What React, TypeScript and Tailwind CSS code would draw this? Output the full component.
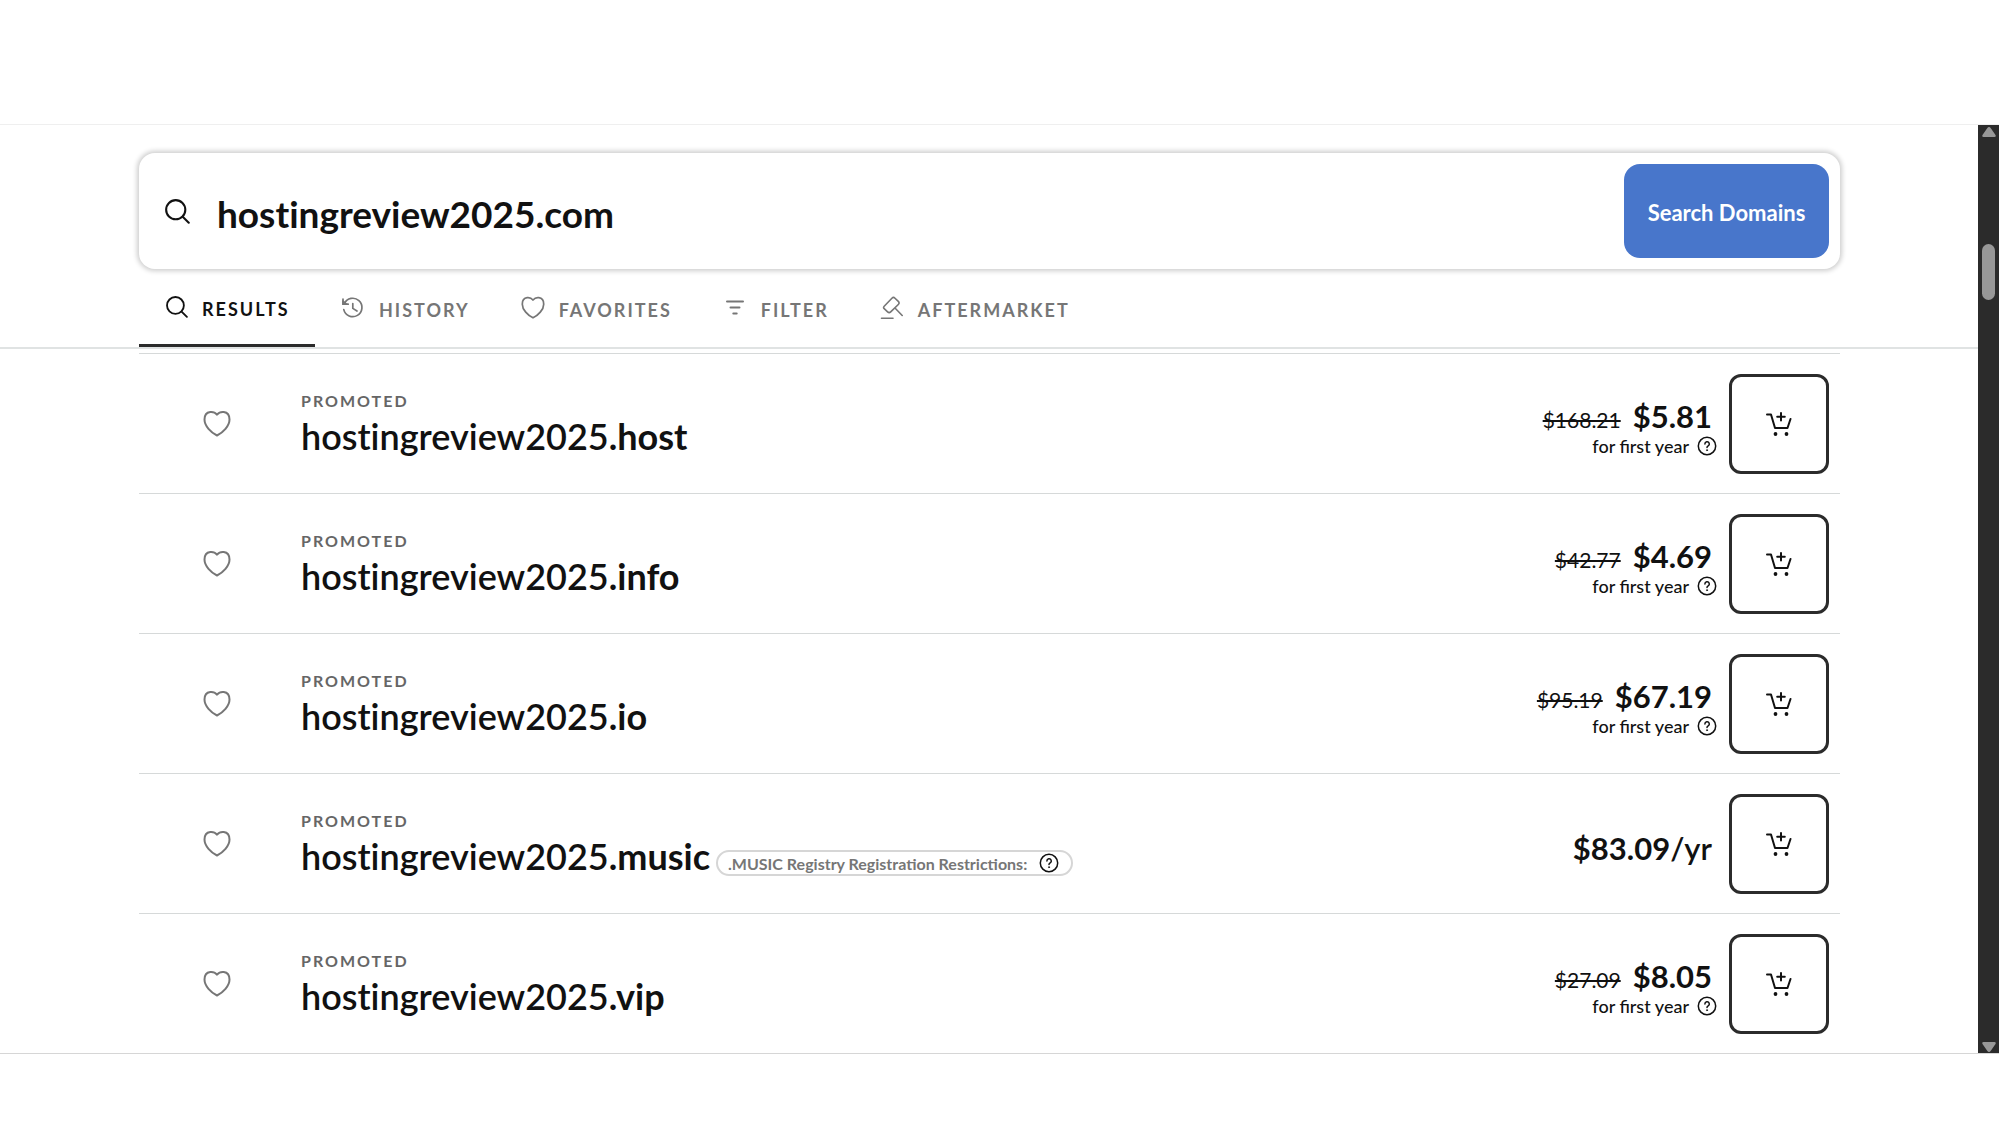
import type { ReactNode } from "react";

type Domain = {
  tld: string;
  price: string;
  oldPrice?: string;
  suffix?: string;
  restriction?: string;
};

const domains: Domain[] = [
  { tld: "host", price: "$5.81", oldPrice: "$168.21" },
  { tld: "info", price: "$4.69", oldPrice: "$42.77" },
  { tld: "io", price: "$67.19", oldPrice: "$95.19" },
  { tld: "music", price: "$83.09", suffix: "/yr", restriction: ".MUSIC Registry Registration Restrictions:" },
  { tld: "vip", price: "$8.05", oldPrice: "$27.09" },
];

function SearchIcon({ className }: { className: string }) {
  return (
    <svg viewBox="0 0 24 24" fill="none" stroke="currentColor" strokeWidth="2" strokeLinecap="round" className={className} aria-hidden="true">
      <circle cx="10.3" cy="10.3" r="9.2" />
      <path d="M17 17 22.8 22.8" />
    </svg>
  );
}

function HistoryIcon() {
  return (
    <svg viewBox="0 0 24 24" fill="none" stroke="currentColor" strokeWidth="1.7" strokeLinecap="round" strokeLinejoin="round" className="size-6" aria-hidden="true">
      <path d="M3.4 7.6A9.2 9.2 0 1 1 2.8 13.6" />
      <path d="M2 3v5.2h5.2M11.8 7.6v4.8l4.2 2.6" />
      <path d="M2 5l3.2 3.2H2Z" fill="currentColor" />
    </svg>
  );
}

function HeartIcon({ className }: { className: string }) {
  return (
    <svg viewBox="0 0 28 28" fill="none" stroke="currentColor" strokeWidth="2" strokeLinejoin="round" className={className} aria-hidden="true">
      <path d="M14 4.7C12.2 2.5 9.6 1.7 7.2 2 3.6 2.5 1.5 5.6 1.5 9.5 1.5 16 8 22.500 14 25.500 20 22.500 26.500 16 26.500 9.500 26.500 5.600 24.400 2.500 20.800 2 18.400 1.700 15.800 2.500 14 4.700Z" />
    </svg>
  );
}

function FilterIcon() {
  return (
    <svg viewBox="0 0 24 24" fill="none" stroke="currentColor" strokeWidth="2" strokeLinecap="round" className="size-6" aria-hidden="true">
      <path d="M4 5.500h16M7.500 11.500h9M10.300 17.500h3.400" />
    </svg>
  );
}

function GavelIcon() {
  return (
    <svg viewBox="0 0 24 24" fill="none" stroke="currentColor" strokeWidth="1.600" strokeLinecap="round" strokeLinejoin="round" className="size-6" aria-hidden="true">
      <path d="M4.200 10.200 11.900 2.200a2.200 2.200 0 0 1 3.100 0l3.300 3.200a2.200 2.200 0 0 1 0 3.100L10.700 15.900a2.200 2.200 0 0 1-3.100 0l-3.400-3.200a1.800 1.800 0 0 1 0-2.500ZM15.200 12.300l7 7.200M1.500 22.300h11.500" />
    </svg>
  );
}

function HelpIcon() {
  return (
    <svg viewBox="0 0 20 20" fill="none" stroke="currentColor" strokeWidth="1.500" strokeLinecap="round" className="size-5" aria-hidden="true">
      <circle cx="10" cy="10" r="8.700" />
      <path d="M7.900 8a2.200 2.200 0 1 1 3.300 1.900c-.8.500-1.200.800-1.200 1.700" />
      <circle cx="10" cy="14.200" r=".6" fill="currentColor" strokeWidth=".6" />
    </svg>
  );
}

function CartIcon() {
  return (
    <svg viewBox="0 0 26 26" fill="none" stroke="currentColor" strokeWidth="2" strokeLinecap="round" strokeLinejoin="round" className="size-[26px]" aria-hidden="true">
      <path d="M1 3.500H5L9 17H21.500L24.500 8M15 2v7.600M11.200 5.800h7.600" />
      <circle cx="9.500" cy="23" r="1.900" fill="currentColor" stroke="none" />
      <circle cx="20.500" cy="23" r="1.900" fill="currentColor" stroke="none" />
    </svg>
  );
}

function Tab({ icon, label, active }: { icon: ReactNode; label: string; active?: boolean }) {
  return (
    <button
      type="button"
      className={
        active
          ? "-mb-px flex h-[78px] w-44 items-center gap-3.5 border-b-[3px] border-[#2b2b2b] pl-[27px] text-[#111]"
          : "flex h-[78px] items-center gap-3.5 px-[25px] text-[#767676]"
      }
    >
      {icon}
      <span className="pt-1 text-lg font-bold tracking-[2px]">{label}</span>
    </button>
  );
}

function DomainRow({ tld, price, oldPrice, suffix, restriction }: Domain) {
  return (
    <li className="flex h-[140px] items-center border-t border-[#d6d9d9] pr-[11px]">
      <button type="button" aria-label={`Save hostingreview2025.${tld}`} className="ml-16 text-[#767676]">
        <HeartIcon className="size-7" />
      </button>
      <div className="ml-[70px] flex-1 pt-1">
        <p className="text-base leading-5 font-bold tracking-[2px] text-[#666]">PROMOTED</p>
        <div className="flex items-center gap-1.5">
          <h2 className="text-[36px] leading-[50px] font-semibold text-[#111] [font-variant-ligatures:none]">
            hostingreview2025<span className="font-bold">.{tld}</span>
          </h2>
          {restriction && (
            <div className="mt-3.5 flex h-[26px] items-center gap-3 rounded-full border-2 border-[#d6d6d6] pr-3 pl-2.5 text-[#767676]">
              <span className="pt-0.5 text-base leading-5 font-bold">{restriction}</span>
              <button type="button" aria-label="About registration restrictions" className="text-[#111]">
                <HelpIcon />
              </button>
            </div>
          )}
        </div>
      </div>
      <div className="mr-3 flex flex-col items-end pt-2 text-[#111]">
        <p className="mr-[5px] flex items-baseline gap-3 leading-8">
          {oldPrice && <s className="text-[21px]">{oldPrice}</s>}
          <span className="text-[31px] font-bold">
            {price}
            {suffix && <span className="font-semibold">{suffix}</span>}
          </span>
        </p>
        {oldPrice && (
          <div className="flex items-center gap-2">
            <span className="text-lg leading-5 font-medium">for first year</span>
            <button type="button" aria-label="About first year pricing">
              <HelpIcon />
            </button>
          </div>
        )}
      </div>
      <button type="button" aria-label={`Add hostingreview2025.${tld} to cart`} className="flex size-[100px] items-center justify-center rounded-xl border-[3px] border-[#2b2b2b] text-[#111]">
        <CartIcon />
      </button>
    </li>
  );
}

function Scrollbar() {
  return (
    <div className="flex w-[21px] flex-col items-center bg-[#2b2b2b] pt-0.5 text-[#989898]" aria-hidden="true">
      <svg viewBox="0 0 14 10" className="h-2.5 w-3.5" fill="currentColor">
        <path d="M7 0q1 0 1.800 1.200L13.500 8q.8 2-1 2h-11q-1.800 0-1-2L5.200 1.200Q6 0 7 0Z" />
      </svg>
      <div className="mt-[107px] h-14 w-[13px] rounded-full bg-[#989898]" />
      <svg viewBox="0 0 14 10" className="mt-auto mb-px h-2.5 w-3.5 rotate-180" fill="currentColor">
        <path d="M7 0q1 0 1.800 1.200L13.500 8q.8 2-1 2h-11q-1.800 0-1-2L5.200 1.200Q6 0 7 0Z" />
      </svg>
    </div>
  );
}

export default function App() {
  return (
    <div className="min-h-screen bg-white pt-[124px] font-['Lato','Liberation_Sans',sans-serif]">
      <div className="flex border-y border-t-[#efefef] border-b-[#d6d6d6]">
        <main className="min-w-0 flex-1">
          <header className="border-b-2 border-[#e0e3e3] pt-7 pr-[138px] pl-[139px]">
            <form
              role="search"
              onSubmit={(e) => e.preventDefault()}
              className="flex h-[116px] items-center rounded-2xl pr-[11px] pl-[26px] shadow-[0_0_5px_2px_rgba(0,0,0,0.2)]"
            >
              <SearchIcon className="size-[25px] text-[#111]" />
              <input
                type="text"
                aria-label="Domain name"
                defaultValue="hostingreview2025.com"
                className="ml-[27px] min-w-0 flex-1 pt-1.5 text-[37px] font-bold text-[#111] outline-none [font-variant-ligatures:none]"
              />
              <button type="submit" className="h-[94px] w-[205px] rounded-2xl bg-[#4876cb] pt-0.5 text-[22px] font-bold text-white">
                Search Domains
              </button>
            </form>
            <nav className="flex gap-px">
              <Tab icon={<SearchIcon className="size-[22px]" />} label="RESULTS" active />
              <Tab icon={<HistoryIcon />} label="HISTORY" />
              <Tab icon={<HeartIcon className="size-6" />} label="FAVORITES" />
              <Tab icon={<FilterIcon />} label="FILTER" />
              <Tab icon={<GavelIcon />} label="AFTERMARKET" />
            </nav>
          </header>
          <ul className="mt-1 mr-[138px] ml-[139px]">
            {domains.map((domain) => (
              <DomainRow key={domain.tld} {...domain} />
            ))}
          </ul>
        </main>
        <Scrollbar />
      </div>
    </div>
  );
}
